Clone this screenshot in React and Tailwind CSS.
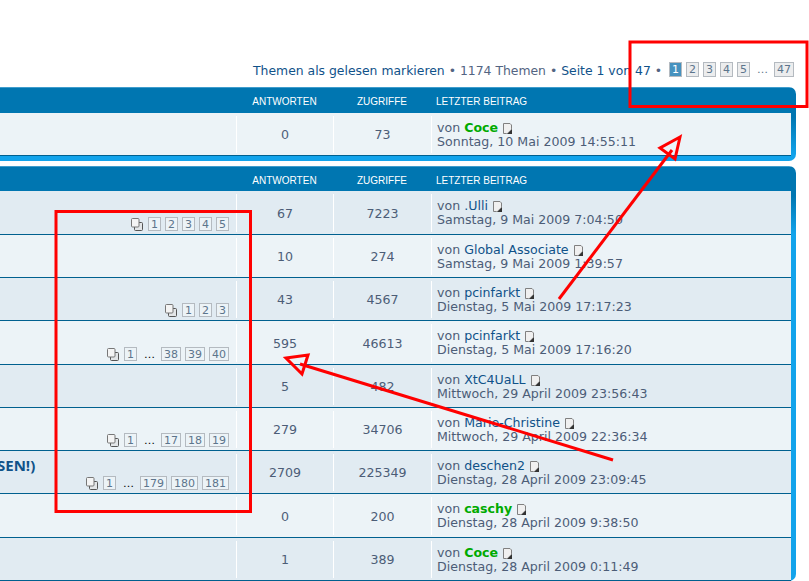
const FONT = "font-['DejaVu_Sans',sans-serif]";

function LastIcon() {
  return (
    <svg width="10" height="11" viewBox="0 0 10 11" className="ml-[5px] shrink-0">
      <path d="M.5 .5H7L8.5 2V10.5H.5Z" fill="#f0f0f0" stroke="#808080" />
      <path d="M9 5.5V11H3.5Z" fill="#333" />
      <path d="M9 5.5L3.5 11" stroke="#fff" strokeWidth=".6" />
    </svg>
  );
}

function PagesIcon() {
  return (
    <svg width="12" height="13" viewBox="0 0 12 13" className="mr-[1px] shrink-0">
      <rect x="3.5" y="4.5" width="8" height="8" rx="1" fill="#e3e6e8" stroke="#555" />
      <rect x=".5" y=".5" width="7.5" height="8.5" rx="1" fill="#f4f4f4" stroke="#777" />
    </svg>
  );
}

function Box({ children, top, active }) {
  return (
    <span
      className={
        "flex items-center justify-center border px-[2px] text-[11px] leading-none tabular-nums border-[#b4bac0] " +
        (top ? "h-[15px] " : "h-[14px] ") +
        (active
          ? "bg-[#4692bf] text-white"
          : top
            ? "bg-[#ecedee] text-[#5c758c]"
            : "bg-[#ecf3f7] text-[#5c758c]")
      }
    >
      {children}
    </span>
  );
}

function Pages({ pages }) {
  return (
    <div className="flex items-center justify-end gap-1">
      <PagesIcon />
      {pages.map((p, i) =>
        p === "..." ? (
          <span key={i} className="ml-[3px] mr-[2px] text-[11px] leading-none text-black">
            …
          </span>
        ) : (
          <Box key={i}>{p}</Box>
        )
      )}
    </div>
  );
}

function Row({ row }) {
  return (
    <div className={"flex border-b border-[#00608f] " + row.h + " " + row.bg}>
      <div className="flex w-[236px] shrink-0 flex-col justify-end pb-[3px] pr-[7px]">
        {row.title && (
          <div className="mb-[2px] -ml-[3px] font-['Open_Sans',sans-serif] text-[15px] font-bold leading-[18px] text-[#105289]">
            {row.title}
          </div>
        )}
        {row.pages && <Pages pages={row.pages} />}
      </div>
      <div className="mb-[2px] mt-[3px] flex w-[97px] shrink-0 items-center justify-center border-l border-white pt-[2px] text-[12.6px] text-[#4c5d77]">
        {row.a}
      </div>
      <div className="mb-[2px] mt-[3px] flex w-[98px] shrink-0 items-center justify-center border-l border-white pt-[2px] text-[12.6px] text-[#4c5d77]">
        {row.z}
      </div>
      <div className="mb-[2px] mt-[3px] min-w-0 flex-1 border-l border-white pl-[5px] pt-[5px] text-[12.6px] leading-[14px] text-[#4c5d77]">
        <div className="flex items-center whitespace-pre">
          <span>von </span>
          <span className={row.green ? "font-bold text-[#00aa00]" : "text-[#105289]"}>{row.by}</span>
          <LastIcon />
        </div>
        <div className="whitespace-pre">{row.date}</div>
      </div>
    </div>
  );
}

function Panel({ rows, className, head }) {
  return (
    <div
      className={
        "w-[796px] rounded-r-[7px] bg-[linear-gradient(#7fc4e8_0,#0076b1_1px,#0076b1_30px,#12a3eb_68px)] pr-[5px] " + className
      }
    >
      <div className={"flex items-center font-['Liberation_Sans',sans-serif] text-[10px] uppercase text-white " + head}>
        <div className="w-[236px] shrink-0" />
        <div className="w-[97px] shrink-0 text-center">Antworten</div>
        <div className="w-[98px] shrink-0 text-center">Zugriffe</div>
        <div className="pl-[5px]">Letzter Beitrag</div>
      </div>
      {rows.map((r, i) => (
        <Row key={i} row={r} />
      ))}
    </div>
  );
}

const B1 = "bg-[#ecf3f7]";
const B2 = "bg-[#e1ebf2]";

const announce = [
  { h: "h-[43px]", bg: B1, a: "0", z: "73", by: "Coce", green: true, date: "Sonntag, 10 Mai 2009 14:55:11" },
];

const topics = [
  { h: "h-[44px]", bg: B2, a: "67", z: "7223", by: ".Ulli", date: "Samstag, 9 Mai 2009 7:04:50", pages: ["1", "2", "3", "4", "5"] },
  { h: "h-[43px]", bg: B1, a: "10", z: "274", by: "Global Associate", date: "Samstag, 9 Mai 2009 1:39:57" },
  { h: "h-[43px]", bg: B2, a: "43", z: "4567", by: "pcinfarkt", date: "Dienstag, 5 Mai 2009 17:17:23", pages: ["1", "2", "3"] },
  { h: "h-[44px]", bg: B1, a: "595", z: "46613", by: "pcinfarkt", date: "Dienstag, 5 Mai 2009 17:16:20", pages: ["1", "...", "38", "39", "40"] },
  { h: "h-[43px]", bg: B2, a: "5", z: "482", by: "XtC4UaLL", date: "Mittwoch, 29 April 2009 23:56:43" },
  { h: "h-[43px]", bg: B1, a: "279", z: "34706", by: "Marie-Christine", date: "Mittwoch, 29 April 2009 22:36:34", pages: ["1", "...", "17", "18", "19"] },
  { h: "h-[43px]", bg: B2, a: "2709", z: "225349", by: "deschen2", date: "Dienstag, 28 April 2009 23:09:45", title: "SEN!)", pages: ["1", "...", "179", "180", "181"] },
  { h: "h-[44px]", bg: B1, a: "0", z: "200", by: "caschy", green: true, date: "Dienstag, 28 April 2009 9:38:50" },
  { h: "h-[43px]", bg: B2, a: "1", z: "389", by: "Coce", green: true, date: "Dienstag, 28 April 2009 0:11:49" },
];

export default function App() {
  return (
    <div className={"relative h-[581px] w-[809px] overflow-hidden bg-white " + FONT}>
      <div className="flex h-[87px] items-end justify-end pb-[10px] pr-[15px]">
        <div className="flex items-center whitespace-pre text-[12.4px] leading-[13px]">
          <span className="pt-[2px] text-[#105289]">Themen als gelesen markieren</span>
          <span className="pt-[2px] text-[#536482]"> • 1174 Themen • </span>
          <span className="pt-[2px] text-[#105289]">Seite 1 von 47</span>
          <span className="pt-[2px] text-[#536482]"> • </span>
          <div className="ml-[3px] flex items-center gap-1">
            <Box top active>1</Box>
            <Box top>2</Box>
            <Box top>3</Box>
            <Box top>4</Box>
            <Box top>5</Box>
            <span className="ml-[3px] mr-[2px] text-[11px] leading-none text-[#5c758c]">…</span>
            <Box top>47</Box>
          </div>
        </div>
      </div>
      <Panel rows={announce} className="h-[74px]" head="h-[26px] pt-[3px]" />
      <Panel rows={topics} className="mt-[5px]" head="h-[25px] pt-[4px]" />
      <svg width="809" height="581" className="pointer-events-none absolute left-0 top-0" fill="none" stroke="#ff0000" strokeWidth="3">
        <rect x="630" y="42" width="177" height="64.5" />
        <rect x="56" y="211.5" width="194.5" height="300" />
        <path d="M559 299L672 150" />
        <path d="M680 137L660 148L675 159Z" />
        <path d="M613 460L300 364" />
        <path d="M286 358L308 355L302 374Z" />
      </svg>
    </div>
  );
}
